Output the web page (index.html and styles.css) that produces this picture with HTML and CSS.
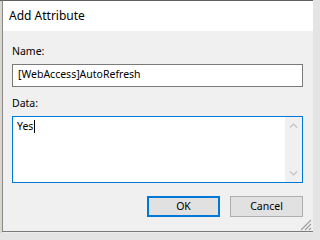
FILE: index.html
```html
<!DOCTYPE html>
<html>
<head>
<meta charset="utf-8">
<link rel="stylesheet" href="styles.css">
</head>
<body>
<div class="screen">
  <div class="strip"></div>
  <div class="window">
    <div class="titlebar">Add Attribute</div>
    <div class="content">
      <div class="label">Name:</div>
      <div class="field">[WebAccess]AutoRefresh</div>
      <div class="label label-data">Data:</div>
      <div class="area">
        <div class="area-text">Yes<span class="caret"></span></div>
        <div class="scrollbar">
          <svg class="chev" width="17" height="17" viewBox="0 0 17 17"><path d="M5 10.5 L8.5 7 L12 10.5" fill="none" stroke="#c2c2c2" stroke-width="1.2"/></svg>
          <svg class="chev" width="17" height="17" viewBox="0 0 17 17"><path d="M5 6.5 L8.5 10 L12 6.5" fill="none" stroke="#c2c2c2" stroke-width="1.2"/></svg>
        </div>
      </div>
      <div class="buttons">
        <div class="btn btn-default">OK</div>
        <div class="btn">Cancel</div>
      </div>
    </div>
    <svg class="grip" width="12" height="12" viewBox="0 0 12 12">
      <path d="M11 1 L1 11 M11 5 L5 11 M11 9 L9 11" stroke="#a0a0a0" stroke-width="1.2" fill="none"/>
    </svg>
  </div>
</div>
</body>
</html>
```
FILE: styles.css
```css
html, body {
  margin: 0;
  padding: 0;
  background: #e4e4e4;
}
.screen {
  width: 313px;
  height: 233px;
  display: flex;
  overflow: hidden;
  font-family: "Noto Sans", "Open Sans", sans-serif;
  color: #000;
  background: #ececec;
}
.strip {
  width: 2px;
  flex: 0 0 2px;
  background: #d9d6d0;
  border-top: 1px solid #606060;
  box-sizing: border-box;
  height: 233px;
}
.window {
  position: relative;
  flex: 1;
  height: 232px;
  box-sizing: border-box;
  border-top: 1px solid #606060;
  border-left: 1px solid #8a8a8a;
  border-bottom: 1px solid #7a7a7a;
  background: #f0f0f0;
  display: flex;
  flex-direction: column;
}
.titlebar {
  height: 30px;
  line-height: 29px;
  background: #ffffff;
  font-size: 12px;
  padding-left: 6px;
  white-space: nowrap;
}
.content {
  flex: 1;
  padding: 13px 10px 0 9px;
  display: flex;
  flex-direction: column;
}
.label {
  font-size: 10.5px;
  line-height: 14px;
  height: 14px;
}
.label-data {
  margin-top: 9px;
}
.field {
  margin-top: 6px;
  height: 23px;
  box-sizing: border-box;
  border: 1px solid #7a7a7a;
  background: #fff;
  font-size: 10.5px;
  line-height: 19px;
  padding: 0 0 2px 5px;
  white-space: nowrap;
}
.area {
  margin-top: 6px;
  height: 67px;
  box-sizing: border-box;
  border: 1px solid #0078d7;
  background: #fff;
  display: flex;
}
.area-text {
  flex: 1;
  font-size: 10.5px;
  line-height: 14px;
  padding: 2px 0 0 4px;
}
.caret {
  display: inline-block;
  width: 1px;
  height: 13px;
  background: #000;
  vertical-align: -3px;
  margin-left: 1px;
}
.scrollbar {
  width: 17px;
  background: #f0f0f0;
  display: flex;
  flex-direction: column;
  justify-content: space-between;
}
.chev {
  display: block;
}
.buttons {
  margin-top: 13px;
  display: flex;
  justify-content: flex-end;
  gap: 10px;
}
.btn {
  width: 73px;
  height: 21px;
  box-sizing: border-box;
  border: 1px solid #adadad;
  background: #e1e1e1;
  font-size: 10.5px;
  line-height: 19px;
  text-align: center;
}
.btn-default {
  border: 2px solid #0078d7;
  line-height: 17px;
}
.grip {
  position: absolute;
  right: 1px;
  bottom: 0;
}
```
